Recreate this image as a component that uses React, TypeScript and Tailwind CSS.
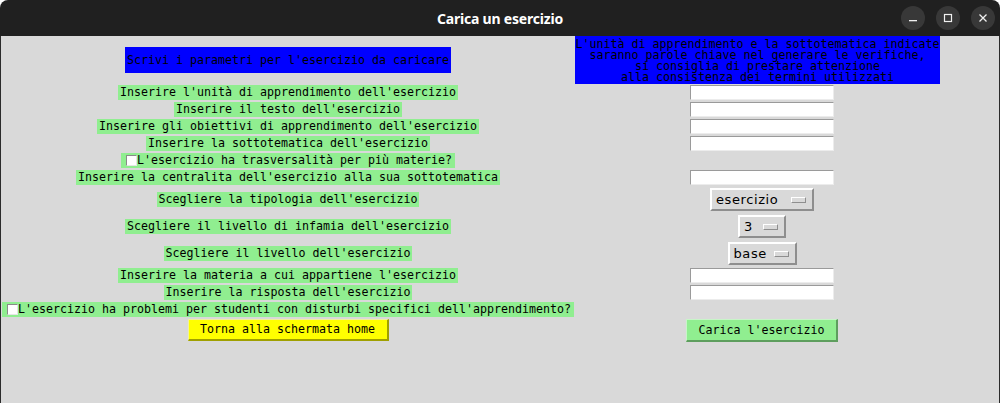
import { ReactNode } from 'react';

const mono = "font-['DejaVu_Sans_Mono',monospace] text-[11.63px] leading-[15px] text-black";

function Label({ children }: { children: ReactNode }) {
  return <div className={`h-[15px] bg-[#90ee90] px-[2px] whitespace-pre ${mono}`}>{children}</div>;
}

function CheckLabel({ children }: { children: ReactNode }) {
  return (
    <div className={`h-[15px] bg-[#90ee90] pl-[5px] pr-[3px] flex items-center whitespace-pre ${mono}`}>
      <span className="w-[11px] h-[11px] bg-white border-t border-l border-[#8a8a8a] border-r-[#e6e6e6] border-b-[#e6e6e6] border-r border-b" />
      <span>{children}</span>
    </div>
  );
}

function Entry() {
  return (
    <div className="w-[144px] h-[15px] bg-white border border-t-[#9a9a9a] border-l-[#9a9a9a] border-b-[#ececec] border-r-[#ececec]" />
  );
}

function OptionMenu({ value, width }: { value: string; width: string }) {
  return (
    <div
      className={`${width} h-[23px] flex items-center justify-between pl-[4px] pr-[6px] bg-[#d9d9d9] border-2 border-t-white border-l-white border-b-[#8e8e8e] border-r-[#8e8e8e]`}>
      <span className="font-['DejaVu_Sans',sans-serif] text-[13px] tracking-[0.6px] text-black leading-none">{value}</span>
      <span className="w-[15px] h-[6px] bg-[#d9d9d9] border border-t-white border-l-white border-b-[#8e8e8e] border-r-[#8e8e8e]" />
    </div>
  );
}

function Row({ left, right, h = 'h-[17px]' }: { left?: ReactNode; right?: ReactNode; h?: string }) {
  return (
    <div className={`flex ${h}`}>
      <div className="w-[574px] flex justify-center items-start">{left}</div>
      <div className="w-[374px] flex justify-center items-start">{right}</div>
    </div>
  );
}

function WinButton({ children }: { children: ReactNode }) {
  return (
    <div className="w-[24px] h-[24px] rounded-full bg-[#383838] flex items-center justify-center text-[#f0f0f0]">
      {children}
    </div>
  );
}

export default function App() {
  return (
    <div className="w-[1000px] h-[403px] bg-white overflow-hidden">
      <div className="h-[36px] bg-[#202020] rounded-t-[8px] flex items-center relative">
        <div className="flex-1 text-center text-white font-['Noto_Sans',sans-serif] font-bold text-[14px] tracking-[-0.2px]">
          Carica un esercizio
        </div>
        <div className="absolute right-[5px] top-[6px] flex gap-[11px]">
          <WinButton>
            <svg width="10" height="10" viewBox="0 0 10 10">
              <rect x="1" y="7" width="8" height="1.3" fill="currentColor" />
            </svg>
          </WinButton>
          <WinButton>
            <svg width="10" height="10" viewBox="0 0 10 10">
              <rect x="1.5" y="1.5" width="7" height="7" fill="none" stroke="currentColor" strokeWidth="1.2" />
            </svg>
          </WinButton>
          <WinButton>
            <svg width="10" height="10" viewBox="0 0 10 10">
              <path d="M1.5 1.5 L8.5 8.5 M8.5 1.5 L1.5 8.5" stroke="currentColor" strokeWidth="1.3" />
            </svg>
          </WinButton>
        </div>
      </div>

      <div className="h-[367px] bg-[#d9d9d9] border-l border-r border-[#2b2b2b]">
        <div className="flex h-[49px]">
          <div className="w-[574px] flex justify-center items-start pt-[11px]">
            <div className={`h-[26px] bg-[#0000ff] px-[2px] flex items-center whitespace-pre ${mono}`}>
              Scrivi i parametri per l'esercizio da caricare
            </div>
          </div>
          <div className="w-[374px]">
            <div className={`w-[365px] h-[48px] bg-[#0000ff] text-center whitespace-pre pt-[3px] font-['DejaVu_Sans_Mono',monospace] text-[11.63px] leading-[11px] text-black`}>
              {"L'unità di apprendimento e la sottotematica indicate\nsaranno parole chiave nel generare le verifiche,\nsi consiglia di prestare attenzione\nalla consistenza dei termini utilizzati"}
            </div>
          </div>
        </div>

        <Row left={<Label>Inserire l'unità di apprendimento dell'esercizio</Label>} right={<Entry />} />
        <Row left={<Label>Inserire il testo dell'esercizio</Label>} right={<Entry />} />
        <Row left={<Label>Inserire gli obiettivi di apprendimento dell'esercizio</Label>} right={<Entry />} />
        <Row left={<Label>Inserire la sottotematica dell'esercizio</Label>} right={<Entry />} />
        <Row left={<CheckLabel>L'esercizio ha trasversalità per più materie?</CheckLabel>} />
        <Row left={<Label>Inserire la centralita dell'esercizio alla sua sottotematica</Label>} right={<Entry />} />

        <Row
          h="h-[27px]"
          left={<div className="pt-[5px]"><Label>Scegliere la tipologia dell'esercizio</Label></div>}
          right={<div className="pt-[1px]"><OptionMenu value="esercizio" width="w-[104px]" /></div>}
        />
        <Row
          h="h-[27px]"
          left={<div className="pt-[5px]"><Label>Scegliere il livello di infamia dell'esercizio</Label></div>}
          right={<div className="pt-[1px]"><OptionMenu value="3" width="w-[48px]" /></div>}
        />
        <Row
          h="h-[27px]"
          left={<div className="pt-[5px]"><Label>Scegliere il livello dell'esercizio</Label></div>}
          right={<div className="pt-[1px]"><OptionMenu value="base" width="w-[69px]" /></div>}
        />

        <Row left={<Label>Inserire la materia a cui appartiene l'esercizio</Label>} right={<Entry />} />
        <Row left={<Label>Inserire la risposta dell'esercizio</Label>} right={<Entry />} />
        <Row left={<CheckLabel>L'esercizio ha problemi per studenti con disturbi specifici dell'apprendimento?</CheckLabel>} />

        <Row
          h="h-[24px]"
          left={
            <button className={`w-[201px] h-[22px] bg-[#ffff00] border-t border-l border-[#f0f0a0] border-b-2 border-r-2 border-b-[#a0a000] border-r-[#a0a000] ${mono}`}>
              Torna alla schermata home
            </button>
          }
          right={
            <button className={`w-[152px] h-[23px] bg-[#90ee90] border-t border-l border-[#c8f5c8] border-b-2 border-r-2 border-b-[#5e9e5e] border-r-[#5e9e5e] ${mono}`}>
              Carica l'esercizio
            </button>
          }
        />
      </div>
    </div>
  );
}
